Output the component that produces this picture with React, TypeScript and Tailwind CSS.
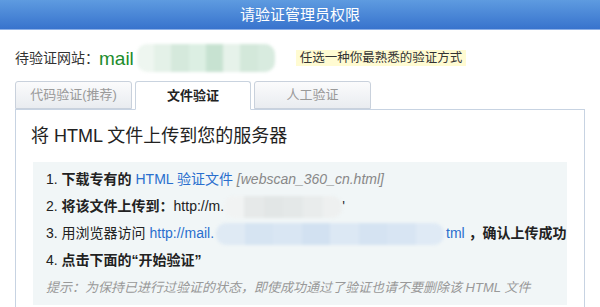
import React from 'react';

const font = { fontFamily: '"Liberation Sans", "Noto Sans CJK SC", sans-serif' };

const Mosaic: React.FC<{ width: string; cells: string[]; className?: string }> = ({ width, cells, className }) => (
  <span className={`inline-flex overflow-hidden rounded-[10px] blur-[1.5px] align-middle ${width} ${className ?? ''}`}>
    {cells.map((c, i) => (
      <span key={i} className="flex-1 h-full" style={{ backgroundColor: c }} />
    ))}
  </span>
);

const Tab: React.FC<{ label: string; active?: boolean }> = ({ label, active }) => (
  <div
    className={
      active
        ? 'w-[116px] h-[29px] -mb-px border border-[#c9d3df] border-b-white bg-white rounded-t-[3px] text-center leading-[27px] text-[13px] font-bold text-[#222] relative z-10'
        : 'w-[117px] h-[28px] border border-[#c9d1dc] bg-gradient-to-b from-[#fbfbfc] to-[#e9ecf0] rounded-t-[3px] text-center leading-[26px] text-[13px] text-[#9a9a9a]'
    }
  >
    {label}
  </div>
);

export default function App() {
  return (
    <div className="w-[600px] h-[307px] overflow-hidden bg-white" style={font}>
      <div className="h-[30px] bg-gradient-to-b from-[#5e9be0] to-[#3873cd] border-b border-[#8db0e6] text-white text-[15px] text-center leading-[29px]">
        请验证管理员权限
      </div>

      <div className="flex items-center h-[30px] mt-[13px] pl-[15px]">
        <span className="text-[14px] text-[#333]">待验证网站：</span>
        <span className="text-[19px] text-[#1c8c2c] leading-none">mail</span>
        <Mosaic
          width="w-[138px] h-[28px]"
          className="ml-[3px]"
          cells={['#eef6f0', '#e4f1e8', '#d5e9dc', '#dcefe3', '#c7e2d1', '#e6f2ea', '#d3e8da', '#d8ebdf']}
        />
        <span className="ml-[21px] bg-[#fffbd2] px-[4px] h-[16px] leading-[16px] text-[12.5px] text-[#333]">
          任选一种你最熟悉的验证方式
        </span>
      </div>

      <div className="flex items-end gap-[3px] mt-[8px] pl-[15px] h-[28px]">
        <Tab label="代码验证(推荐)" />
        <Tab label="文件验证" active />
        <Tab label="人工验证" />
      </div>

      <div className="mx-[15px] h-[200px] border border-b-0 border-[#c7d3e2]">
        <div className="pl-[15px] pt-[14px] h-[52px] text-[18px] text-[#222] leading-[24px]">
          将 HTML 文件上传到您的服务器
        </div>
        <div className="mx-[17px] h-[143px] bg-[#f1f6f7] pl-[13px] pt-[4px] text-[14px] text-[#222] leading-[27px]">
          <div>
            1. <b>下载专有的</b>{' '}
            <span className="text-[#2a6fce]">HTML 验证文件</span>{' '}
            <i className="text-[#888]">[webscan_360_cn.html]</i>
          </div>
          <div className="flex items-center whitespace-pre">
            <span>2. </span>
            <b>将该文件上传到：</b>
            <span>http://m.</span>
            <Mosaic
              width="w-[118px] h-[22px]"
              cells={['#f1f3f3', '#e6e9e9', '#e2e6e6', '#e4e8e8', '#e9ecec', '#eef0f0']}
            />
            <span>'</span>
          </div>
          <div className="flex items-center whitespace-pre">
            <span>3. 用浏览器访问 </span>
            <span className="text-[#2a6fce]">http://mail.</span>
            <Mosaic
              width="w-[228px] h-[22px]"
              className="mx-[2px]"
              cells={['#dfeaf4', '#d6e4f2', '#d9e6f3', '#d2e1f1', '#dce8f4', '#d5e3f2', '#d8e5f3', '#dfeaf5']}
            />
            <span className="text-[#2a6fce]">tml </span>
            <b>，确认上传成功</b>
          </div>
          <div>
            4. <b>点击下面的“开始验证”</b>
          </div>
          <div className="italic text-[#999] text-[13px]">
            提示：为保持已进行过验证的状态，即使成功通过了验证也请不要删除该 HTML 文件
          </div>
        </div>
      </div>
    </div>
  );
}
